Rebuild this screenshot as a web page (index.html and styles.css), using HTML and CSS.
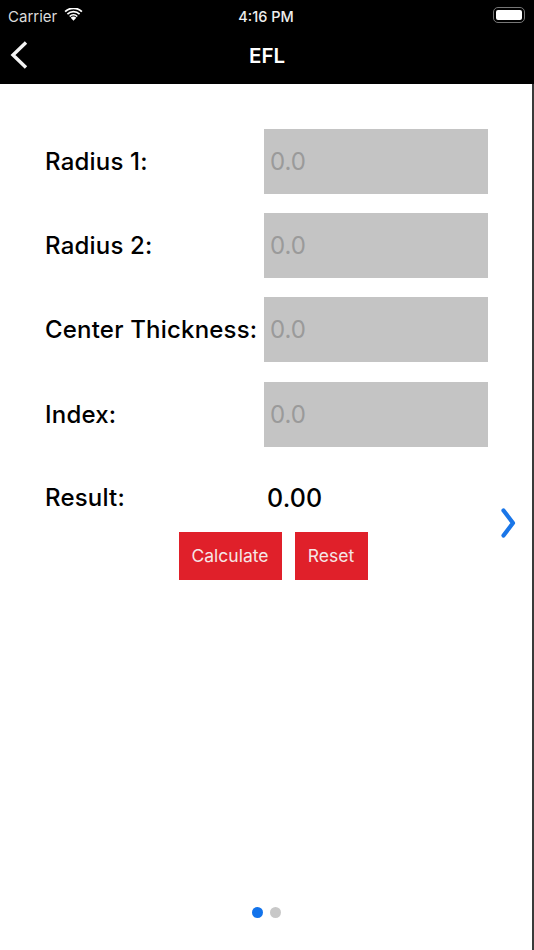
FILE: index.html
```html
<!DOCTYPE html>
<html lang="en">
<head>
<meta charset="utf-8">
<title>EFL</title>
<link rel="stylesheet" href="styles.css">
</head>
<body>
<div class="screen">
  <header class="topbar">
    <div class="status">
      <div class="status-left">
        <span class="carrier">Carrier</span>
        <svg class="wifi" viewBox="0 0 18 13" width="19" height="13"><path d="M9 12.8 6.2 9.7a3.9 3.9 0 0 1 5.6 0Z" fill="#fff"/><path d="M4.6 7.9a6.3 6.3 0 0 1 8.8 0l-1.2 1.2a4.7 4.7 0 0 0-6.4 0Z" fill="#fff"/><path d="M2.3 5.4a9.6 9.6 0 0 1 13.4 0l-1.2 1.3a7.9 7.9 0 0 0-11 0Z" fill="#fff"/><path d="M0 3a13 13 0 0 1 18 0l-1.2 1.3a11.2 11.2 0 0 0-15.6 0Z" fill="#fff"/></svg>
      </div>
      <span class="clock">4:16 PM</span>
      <div class="battery"><span class="battery-fill"></span></div>
    </div>
    <div class="nav">
      <svg class="back" viewBox="0 0 18 28" width="18" height="28"><path d="M16 1.5 3 14l13 12.5" fill="none" stroke="#f4f4f4" stroke-width="3.4"/></svg>
      <h1 class="title">EFL</h1>
    </div>
  </header>
  <main class="content">
    <form class="form">
      <div class="row"><label class="label">Radius 1:</label><input class="field" placeholder="0.0"></div>
      <div class="row"><label class="label">Radius 2:</label><input class="field" placeholder="0.0"></div>
      <div class="row"><label class="label">Center Thickness:</label><input class="field" placeholder="0.0"></div>
      <div class="row"><label class="label">Index:</label><input class="field" placeholder="0.0"></div>
    </form>
    <div class="result"><span class="label">Result:</span><span class="value">0.00</span></div>
    <div class="actions">
      <button class="btn btn-calc" type="button">Calculate</button>
      <button class="btn btn-reset" type="button">Reset</button>
    </div>
    <svg class="next" viewBox="0 0 17 30" width="17" height="30"><path d="M3.5 2.5 13 15 3.5 27.5" fill="none" stroke="#1a76e8" stroke-width="4.2" stroke-linejoin="round" stroke-linecap="round"/></svg>
    <div class="dots"><span class="dot dot-on"></span><span class="dot"></span></div>
  </main>
</div>
</body>
</html>
```
FILE: styles.css
```css
* { box-sizing: border-box; }
html, body { margin: 0; padding: 0; }
body { width: 534px; height: 950px; overflow: hidden; background: #fff; font-family: Inter, "Liberation Sans", sans-serif; color: #000; }
.screen { width: 534px; height: 950px; display: flex; flex-direction: column; }
.topbar { height: 84px; background: #000; color: #fff; flex: none; }
.status { height: 32px; padding: 0 9px 0 8px; display: flex; align-items: center; justify-content: space-between; position: relative; }
.status-left { display: flex; align-items: center; gap: 7px; }
.carrier { font-size: 15px; color: #dcdcdc; }
.wifi { margin-top: -4px; }
.clock { position: absolute; left: 0; right: 0; text-align: center; font-size: 14.5px; font-weight: 500; color: #eee; padding-right: 2px; }
.battery { width: 32px; height: 16px; border: 1.5px solid #777; border-radius: 5px; padding: 2px; margin-top: -2px; }
.battery-fill { display: block; height: 100%; background: #fff; border-radius: 2px; }
.nav { height: 52px; display: flex; align-items: center; justify-content: center; position: relative; padding-bottom: 6px; }
.back { position: absolute; left: 10px; top: 9px; }
.title { margin: 0; font-size: 20.5px; font-weight: 600; }
.content { flex: 1; position: relative; padding: 45px 0 0 45px; border-right: 2px solid #3a3a3a; }
.form { display: flex; flex-direction: column; gap: 19.2px; }
.row { display: flex; align-items: center; height: 65px; }
.label { width: 219px; flex: none; font-size: 24px; font-weight: 550; letter-spacing: 0.2px; white-space: nowrap; }
.field { width: 224px; height: 65px; border: 0; border-radius: 0; background: #c4c4c4; padding: 0 6px; font: 400 24px Inter, "Liberation Sans", sans-serif; outline: none; }
.field::placeholder { color: #9a9a9a; opacity: 1; }
.result { display: flex; align-items: center; margin-top: 34px; height: 34px; }
.value { margin-left: 3px; font-size: 25px; font-weight: 500; letter-spacing: 0.2px; }
.actions { display: flex; gap: 13px; margin: 17px 0 0 134px; }
.btn { height: 48px; border: 0; border-radius: 0; padding: 0 1px 0 0; background: #e0202a; color: #f6e6e6; font: 400 17.5px Inter, "Liberation Sans", sans-serif; }
.btn-calc { width: 103px; }
.btn-reset { width: 73px; }
.next { position: absolute; left: 500px; top: 424px; }
.dots { position: absolute; left: 252px; top: 823px; display: flex; gap: 7px; }
.dot { width: 11px; height: 11px; border-radius: 50%; background: #c8c8c8; }
.dot-on { background: #1273eb; }
```
